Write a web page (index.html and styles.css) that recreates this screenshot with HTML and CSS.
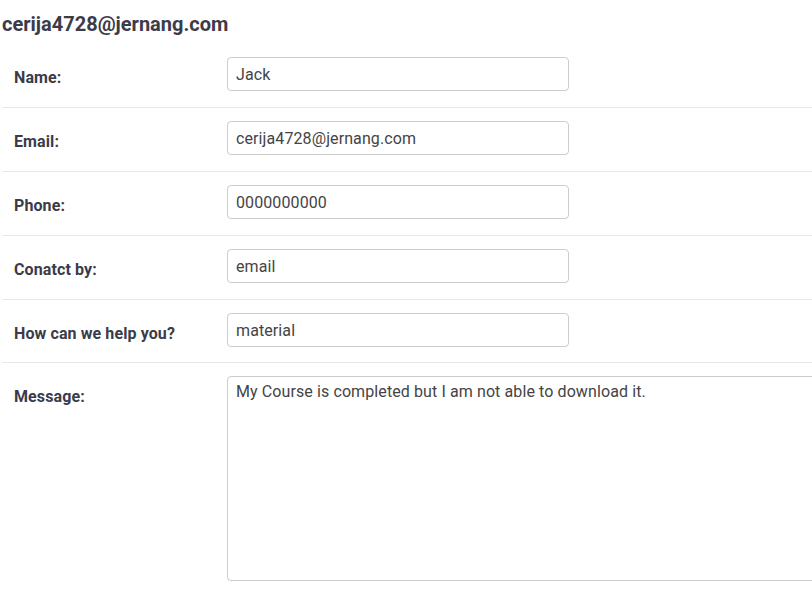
FILE: index.html
```html
<!DOCTYPE html>
<html>
<head>
<meta charset="utf-8">
<link rel="stylesheet" href="styles.css">
</head>
<body>
<div class="page">
  <h2 class="title">cerija4728@jernang.com</h2>
  <table class="details">
    <tr>
      <th>Name:</th>
      <td><input class="field" type="text" value="Jack"></td>
    </tr>
    <tr>
      <th>Email:</th>
      <td><input class="field" type="text" value="cerija4728@jernang.com"></td>
    </tr>
    <tr>
      <th>Phone:</th>
      <td><input class="field" type="text" value="0000000000"></td>
    </tr>
    <tr>
      <th>Conatct by:</th>
      <td><input class="field" type="text" value="email"></td>
    </tr>
    <tr class="short">
      <th>How can we help you?</th>
      <td><input class="field" type="text" value="material"></td>
    </tr>
    <tr>
      <th>Message:</th>
      <td><textarea class="area">My Course is completed but I am not able to download it.</textarea></td>
    </tr>
  </table>
</div>
</body>
</html>
```

FILE: styles.css
```css
html, body {
  margin: 0;
  padding: 0;
  background: #fff;
  overflow: hidden;
}
body {
  font-family: Roboto, "Liberation Sans", sans-serif;
  color: #3b3b4a;
}
.page {
  padding: 0 0 0 2px;
  width: 900px;
}
.title {
  margin: 0;
  padding-top: 12px;
  height: 32px;
  font-size: 20px;
  font-weight: 700;
  line-height: 24px;
  color: #3b3b4a;
}
.details {
  border-collapse: collapse;
  width: 900px;
}
.details tr + tr th,
.details tr + tr td {
  border-top: 1px solid #e8e8e8;
}
.details th {
  width: 201px;
  text-align: left;
  vertical-align: top;
  padding: 24px 0 0 12px;
  font-size: 16px;
  font-weight: 700;
  line-height: 20px;
  letter-spacing: 0.1px;
  color: #3b3b4a;
}
.details td {
  padding: 13px 0 16px 12px;
  vertical-align: top;
}
.details .short td {
  padding-bottom: 15px;
}
.field {
  display: block;
  box-sizing: border-box;
  width: 342px;
  height: 34px;
  margin: 0;
  padding: 0 8px;
  border: 1px solid #cccccc;
  border-radius: 4px;
  font-family: Roboto, "Liberation Sans", sans-serif;
  font-size: 16px;
  letter-spacing: 0.1px;
  color: #444444;
  background: #fff;
}
.area {
  display: block;
  box-sizing: border-box;
  width: 640px;
  height: 205px;
  margin: 0;
  padding: 5px 8px;
  border: 1px solid #cccccc;
  border-radius: 4px;
  font-family: Roboto, "Liberation Sans", sans-serif;
  font-size: 16px;
  line-height: 20px;
  letter-spacing: 0.1px;
  color: #444444;
  resize: none;
  background: #fff;
}
```
